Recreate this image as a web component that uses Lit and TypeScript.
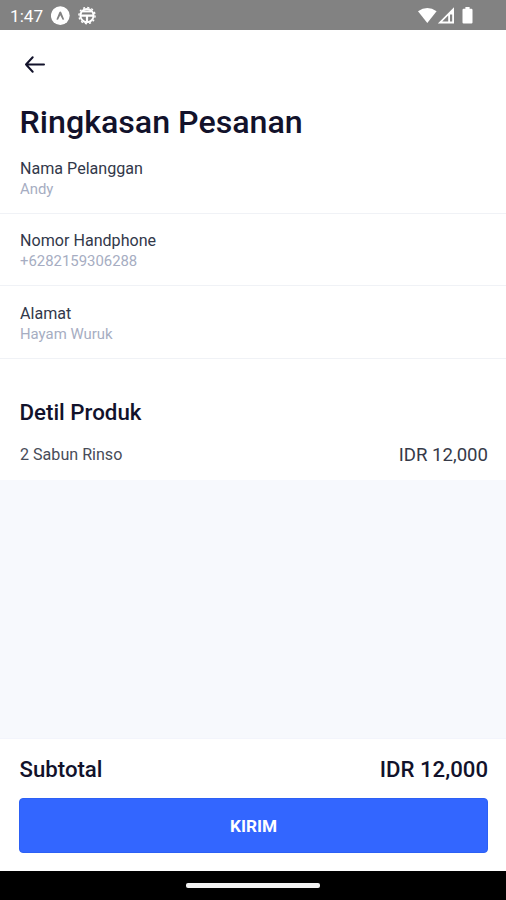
import { LitElement, html, css } from "lit";
import { customElement } from "lit/decorators.js";

interface Field {
  label: string;
  value: string;
}

const FIELDS: Field[] = [
  { label: "Nama Pelanggan", value: "Andy" },
  { label: "Nomor Handphone", value: "+6282159306288" },
  { label: "Alamat", value: "Hayam Wuruk" },
];

@customElement("status-bar")
class StatusBar extends LitElement {
  static styles = css`
    :host {
      display: flex;
      align-items: center;
      height: 30px;
      box-sizing: border-box;
      padding: 1px 33px 0 10px;
      background: #828282;
      color: #fff;
      font-size: 17.2px;
    }
    .time {
      width: 41px;
      line-height: 20px;
    }
    .spacer {
      flex: 1;
    }
    svg {
      display: block;
      flex: none;
    }
    .gear {
      margin-left: 8px;
    }
    .battery {
      margin-left: 7px;
    }
  `;

  render() {
    return html`
      <span class="time">1:47</span>
      <svg width="19" height="20" viewBox="0 0 19 20">
        <circle cx="9.3" cy="9.6" r="9.4" fill="#fff" />
        <path d="M5.4 13.4 8.2 6.6Q9.3 4.4 10.4 6.6L13.2 13.4 11.6 13.8 9.3 9.2 7 13.8Z" fill="#828282" />
      </svg>
      <svg class="gear" width="18" height="20" viewBox="0 0 18 20" fill="none" stroke="#fff">
        <circle cx="9" cy="9.6" r="8.1" stroke-width="1.4" stroke-dasharray="2.1 2.14" />
        <circle cx="9" cy="9.6" r="6.6" stroke-width="2" />
        <path d="M3 9.6H15M9 9.6V16" stroke-width="2.2" />
        <path d="M5 5.4H13" stroke-width="2" />
      </svg>
      <span class="spacer"></span>
      <svg width="37" height="20" viewBox="0 0 37 20">
        <path d="M0 5.2Q9.4-1.2 18.6 5.2L9.3 17Z" fill="#fff" />
        <path
          fill-rule="evenodd"
          d="M36 1.2V17.4H19.8ZM34.2 8.4H32V15.6H34.2ZM30.2 9.6 24.2 15.6H30.2Z"
          fill="#fff"
        />
      </svg>
      <svg class="battery" width="11" height="20" viewBox="0 0 11 20">
        <path d="M3.4 1H7.6V2.8H9.4Q10.5 2.8 10.5 3.9V16.4Q10.5 17.5 9.4 17.5H1.6Q.5 17.5 .5 16.4V3.9Q.5 2.8 1.6 2.8H3.4Z" fill="#fff" />
      </svg>
    `;
  }
}

@customElement("detail-row")
class DetailRow extends LitElement {
  static properties = { label: {}, value: {} };
  declare label: string;
  declare value: string;

  static styles = css`
    :host {
      display: block;
      box-sizing: border-box;
      height: 72.5px;
      padding: 16.5px 20px 0;
      border-bottom: 1px solid #f0f2f6;
    }
    .label {
      color: #32384a;
      font-size: 16.1px;
      line-height: 21px;
    }
    .value {
      color: #a6adc2;
      font-size: 14.9px;
      line-height: 20px;
    }
  `;

  render() {
    return html`
      <div class="label">${this.label}</div>
      <div class="value">${this.value}</div>
    `;
  }
}

@customElement("app-root")
class AppRoot extends LitElement {
  static styles = css`
    :host {
      display: flex;
      flex-direction: column;
      height: 900px;
      overflow: hidden;
      background: #f7f9fd;
      color: #12122b;
      font-family: Roboto, sans-serif;
    }
    .sheet {
      height: 450px;
      box-sizing: border-box;
      background: #fff;
    }
    .back {
      display: block;
      padding: 25px 0 0 24px;
    }
    h1 {
      margin: 0;
      padding: 28px 20px 0.4px 19.5px;
      font-size: 32.2px;
      font-weight: 500;
      line-height: 38px;
    }
    h2 {
      margin: 0;
      padding: 39.5px 20px 0 19.5px;
      font-size: 22.3px;
      font-weight: 500;
      line-height: 28px;
    }
    .line {
      display: flex;
      justify-content: space-between;
      align-items: center;
      padding: 0 18px 0 19.5px;
    }
    .product {
      margin-top: 16.6px;
      line-height: 24px;
      font-size: 16.1px;
      color: #484c58;
      padding-left: 20px;
    }
    .price {
      font-size: 18.6px;
      color: #363a48;
    }
    .fill {
      flex: 1;
    }
    .footer {
      height: 133px;
      box-sizing: border-box;
      padding-top: 16px;
      background: #fff;
      border-top: 1px solid #f3f5fc;
    }
    .total {
      font-size: 22.2px;
      font-weight: 500;
      line-height: 28px;
    }
    button {
      display: block;
      width: 469px;
      height: 55px;
      margin: 15px 0 0 19px;
      padding: 0;
      border: 1px solid #2c60f5;
      border-radius: 4px;
      background: #3366ff;
      color: #fff;
      font: 700 17.2px/24px Roboto, sans-serif;
    }
    .nav {
      display: flex;
      justify-content: center;
      align-items: center;
      height: 29px;
      background: #000;
    }
    .pill {
      width: 134px;
      height: 5px;
      border-radius: 2px;
      background: #f2f2f2;
    }
  `;

  render() {
    return html`
      <status-bar></status-bar>
      <div class="sheet">
        <svg class="back" width="22" height="20" viewBox="0 0 22 20" fill="none" stroke="#12122b" stroke-width="2" stroke-linecap="round" stroke-linejoin="round">
          <path d="M20 9.5H2M8.7 2.2 2 9.5 8.7 16.8" />
        </svg>
        <h1>Ringkasan Pesanan</h1>
        ${FIELDS.map((f) => html`<detail-row .label=${f.label} .value=${f.value}></detail-row>`)}
        <h2>Detil Produk</h2>
        <div class="line product">
          <span>2 Sabun Rinso</span>
          <span class="price">IDR 12,000</span>
        </div>
      </div>
      <div class="fill"></div>
      <div class="footer">
        <div class="line total">
          <span>Subtotal</span>
          <span>IDR 12,000</span>
        </div>
        <button>KIRIM</button>
      </div>
      <div class="nav"><div class="pill"></div></div>
    `;
  }
}
